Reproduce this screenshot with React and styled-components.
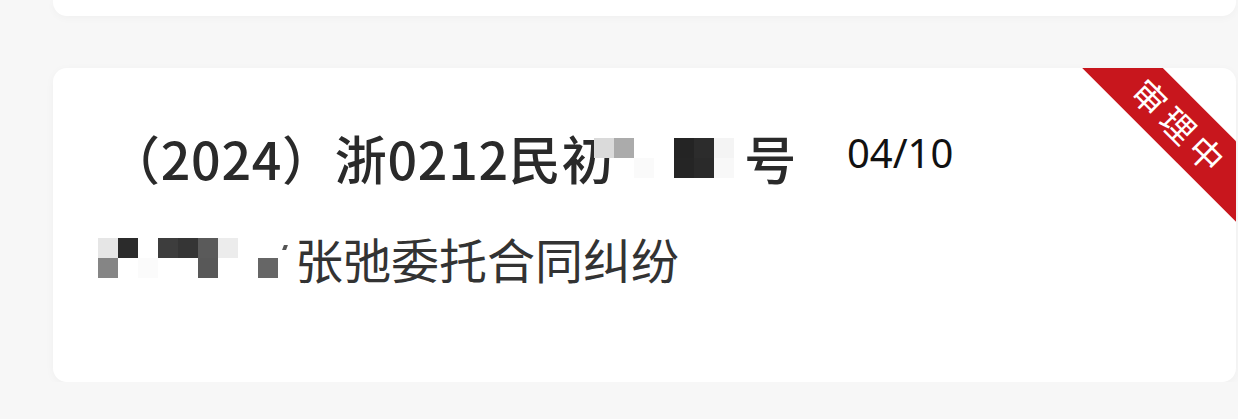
import React from 'react';
import styled, {createGlobalStyle} from 'styled-components';

const GlobalStyle = createGlobalStyle`
  html, body {
    margin: 0;
    padding: 0;
    background: #f7f7f7;
    font-family: "Noto Sans CJK SC", "Noto Sans", sans-serif;
  }
`;

const List = styled.div`
  display: flex;
  flex-direction: column;
  gap: 52px;
  padding: 0 2px 0 53px;
`;

const PrevCard = styled.div`
  height: 16px;
  background: #fff;
  border-radius: 0 0 14px 14px;
  box-shadow: 0 2px 8px rgba(0, 0, 0, 0.03);
`;

const Card = styled.div`
  position: relative;
  overflow: hidden;
  background: #fff;
  border-radius: 14px;
  box-shadow: 0 2px 10px rgba(0, 0, 0, 0.035);
  padding: 60px 45px 94px;
  height: 314px;
  box-sizing: border-box;
`;

const TitleRow = styled.div`
  display: flex;
  align-items: center;
  height: 60px;
  padding-left: 10px;
`;

const Title = styled.div`
  display: flex;
  align-items: center;
  font-size: 52px;
  line-height: 60px;
  font-weight: 500;
  letter-spacing: 0.7px;
  color: #2a2a2a;
  white-space: nowrap;
`;

const Date = styled.div`
  margin-left: 50px;
  margin-top: -12px;
  font-family: "Noto Sans", sans-serif;
  font-size: 40px;
  color: #111;
`;

const Subtitle = styled.div`
  display: flex;
  align-items: center;
  margin-top: 40px;
  height: 60px;
  font-size: 48px;
  line-height: 60px;
  color: #333;
  white-space: nowrap;
`;

const Mosaic = styled.div`
  display: grid;
  grid-template-columns: repeat(${p => p.cols}, 20px);
  grid-auto-rows: 20px;
  margin-left: ${p => p.offset || 0}px;
  margin-right: ${p => p.after || 0}px;
  position: relative;
`;

const Cell = styled.div`
  background: ${p => p.c};
`;

const Tick = styled.span`
  width: 4px;
  height: 5px;
  margin: 0 8px 22px 5px;
  background: #555;
  transform: skewX(-20deg);
`;

const Ribbon = styled.div`
  position: absolute;
  top: 28px;
  right: -73px;
  width: 260px;
  height: 57px;
  background: #c8161d;
  transform: rotate(45deg);
  display: flex;
  align-items: center;
  justify-content: center;
  color: #fff;
  font-size: 34px;
  letter-spacing: 6px;
  text-indent: 6px;
`;

const titleCells = [
  '#dadada', '#ababab', '#fff', '#fff', '#242424', '#2c2c2c', '#f4f4f4',
  'transparent', '#fff', '#fafafa', '#fff', '#252525', '#2a2a2a', '#f8f8f8'
];

const nameCells = [
  '#e6e6e6', '#2b2b2b', '#fff', '#3d3d3d', '#353535', '#5a5a5a', '#ececec', '#fff', '#fff',
  '#858585', '#fff', '#fbfbfb', '#fff', '#fff', '#585858', '#fff', '#fff', '#666'
];

const Pixelated = ({cells, cols, offset, after}) => (
  <Mosaic cols={cols} offset={offset} after={after}>
    {cells.map((c, i) => <Cell key={i} c={c} />)}
  </Mosaic>
);

export default function App() {
  return (
    <>
      <GlobalStyle />
      <List>
        <PrevCard />
        <Card>
          <Ribbon>审理中</Ribbon>
          <TitleRow>
            <Title>
              （2024）浙0212民初
              <Pixelated cells={titleCells} cols={7} offset={-20} after={10} />
              号
            </Title>
            <Date>04/10</Date>
          </TitleRow>
          <Subtitle>
            <Pixelated cells={nameCells} cols={9} />
            <Tick />
            张弛委托合同纠纷
          </Subtitle>
        </Card>
      </List>
    </>
  );
}
